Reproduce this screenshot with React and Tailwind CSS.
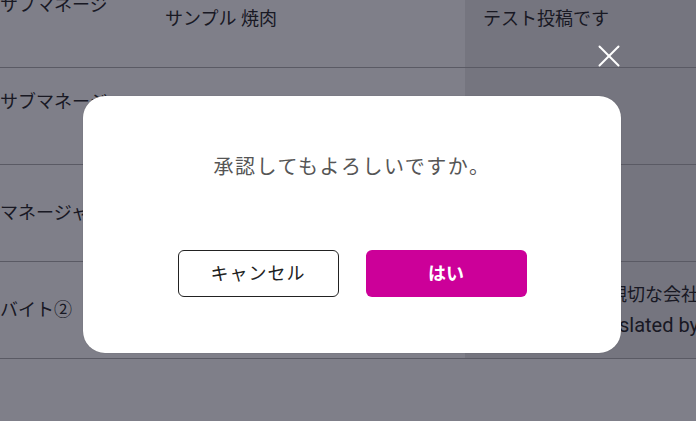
import React from 'react';

const rows = [
    { role: 'サブマネージ', rolePad: 'self-start pt-[21px]', shop: 'サンプル 焼肉', body: ['テスト投稿です'] },
    { role: 'サブマネージャー', rolePad: 'self-start pt-[21px]', shop: 'サンプル 焼肉', body: ['テスト投稿です'] },
    { role: 'マネージャー', rolePad: '', shop: 'サンプル 焼肉', body: ['テスト投稿です'] },
    { role: 'バイト②', rolePad: '', shop: 'サンプル 焼肉', body: ['スタッフ全員が親切な会社です'], note: 'Texts were translated by Google' },
];

const CloseIcon = () => (
    <svg width="22" height="22" viewBox="0 0 22 22" fill="none" stroke="white" strokeWidth="2" strokeLinecap="round">
        <line x1="1.5" y1="1.5" x2="20.5" y2="20.5" />
        <line x1="20.5" y1="1.5" x2="1.5" y2="20.5" />
    </svg>
);

const App = () => {
    return (
        <div className="relative w-full h-[421px] overflow-hidden bg-white text-[#333] font-['Roboto','Noto_Sans_CJK_JP',sans-serif]">
            {/* table behind the overlay */}
            <div className="-mt-[29px] flex flex-col">
                {rows.map((r, i) => (
                    <div key={i} className="flex h-[97px] border-b border-[#b4b4b4]">
                        <div className={`w-[150px] shrink-0 flex items-center whitespace-nowrap text-[18px] leading-[26px] ${r.rolePad}`}>
                            {r.role}
                        </div>
                        <div className="w-[315px] shrink-0 pl-[15px] flex items-center text-[18px] leading-[26px] whitespace-nowrap">
                            {r.shop}
                        </div>
                        <div className="flex-1 bg-[#eaeaea] pl-[18px] flex flex-col justify-center text-[18px] leading-[30px] whitespace-nowrap">
                            {r.body.map((t, j) => <div key={j}>{t}</div>)}
                            {r.note && <div className="text-[20px]">{r.note}</div>}
                        </div>
                    </div>
                ))}
            </div>

            {/* overlay */}
            <div className="absolute inset-0 bg-[rgba(0,0,20,0.5)]">
                <div className="absolute left-[83px] top-[96px] w-[538px] h-[257px]">
                    <button className="absolute right-[1px] -top-[51px] w-[22px] h-[22px]">
                        <CloseIcon />
                    </button>
                    <div className="w-full h-full bg-white rounded-[22px] flex flex-col items-center pt-[57px] shadow-[0_0_1px_rgba(0,0,0,0.3)]">
                        <p className="text-[20px] leading-[28px] text-[#555] tracking-[1.5px]">承認してもよろしいですか。</p>
                        <div className="mt-[69px] flex gap-[27px]">
                            <button className="w-[161px] h-[47px] rounded-[6px] border border-[#222] bg-white text-[18px] text-[#222] tracking-[1px]">
                                キャンセル
                            </button>
                            <button className="w-[161px] h-[47px] rounded-[6px] bg-[#cc0099] text-[18px] font-bold text-white">
                                はい
                            </button>
                        </div>
                    </div>
                </div>
            </div>
        </div>
    );
};

export default App;
